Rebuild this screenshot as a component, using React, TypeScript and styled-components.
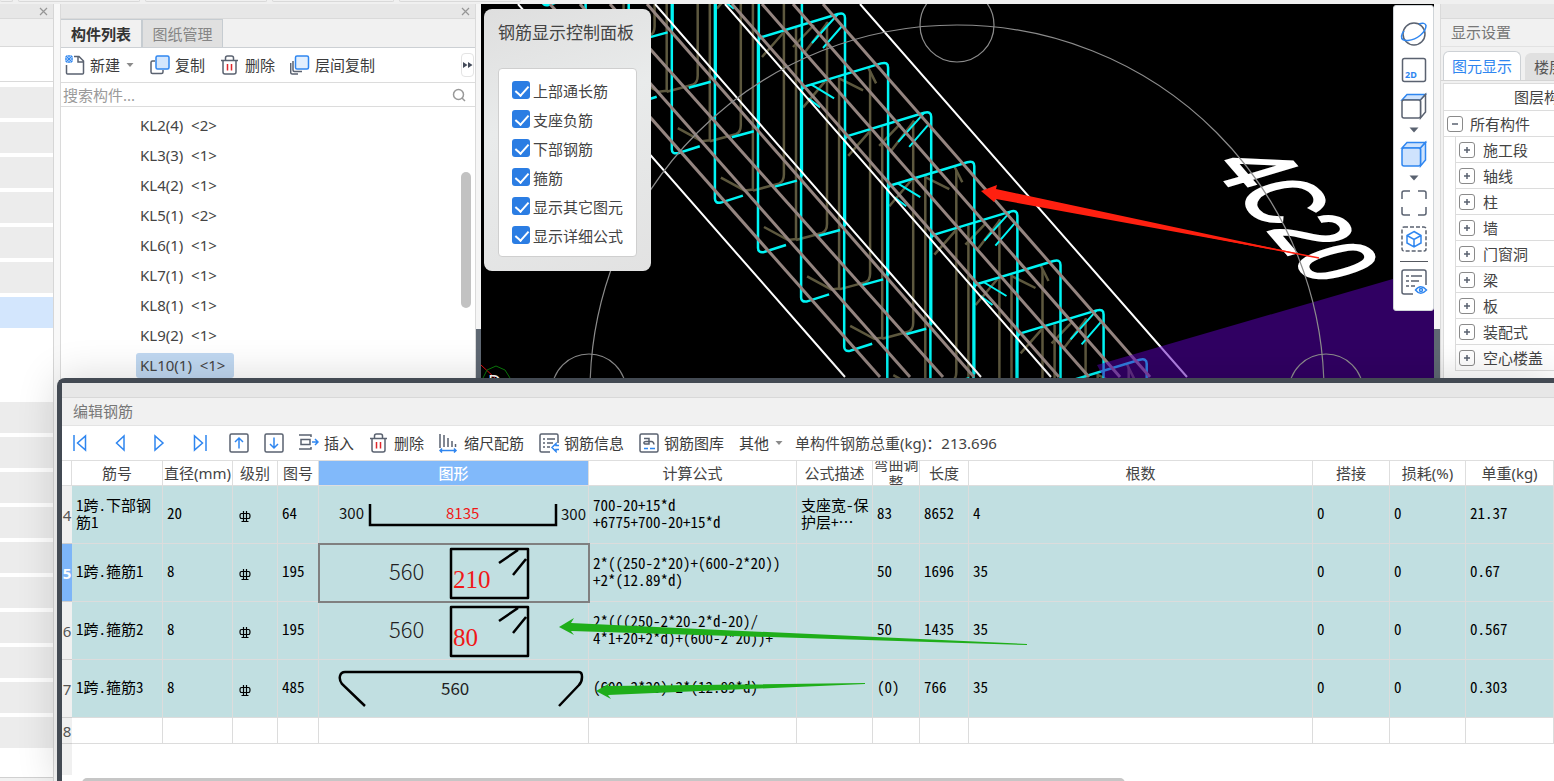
import React from "react";
import styled, { createGlobalStyle } from "styled-components";

const ui = `"Noto Sans", "Noto Sans CJK SC", sans-serif`;
const mono = `"Noto Sans Mono CJK SC", "Liberation Mono", "Noto Sans CJK SC", monospace`;

const Global = createGlobalStyle`
  * { box-sizing: border-box; }
  body { margin: 0; overflow: hidden; font-family: ${ui}; font-size: 15px; color: #444; background: #f0f0f0; }
  button, input { font: inherit; color: inherit; }
`;

/* ---------- shell ---------- */
const Screen = styled.div`
  position: relative;
  display: flex;
  flex-direction: column;
  height: 100vh;
  overflow: hidden;
`;
const Ribbon = styled.div`
  display: flex;
  gap: 5px;
  height: 4px;
  flex: none;
  background: #f0f0f0;
`;
const RibbonGroup = styled.div<{ $first?: boolean }>`
  width: ${(p) => (p.$first ? 13 : 122)}px;
  height: 2px;
  border: 1px solid #d9d9d9;
  border-top: 0;
  border-left-width: ${(p) => (p.$first ? 0 : 1)}px;
  border-radius: 0 0 3px 3px;
`;
const Workspace = styled.div`
  display: flex;
  flex: 1;
  min-height: 0;
`;
const Gutter = styled.div<{ $dark?: boolean; $w?: number }>`
  width: ${(p) => p.$w ?? 6}px;
  flex: none;
  background: ${(p) =>
    p.$dark ? "linear-gradient(#f5f5f5 325px, #5f6873 325px)" : "#f8f8f8"};
`;
const GripBar = styled.div`
  display: flex;
  align-items: center;
  justify-content: flex-end;
  flex: none;
  height: 15px;
  padding-right: 4px;
  background: #e7e7e7;
  border-bottom: 1px solid #dadada;
`;
const CloseButton = styled.button`
  display: flex;
  padding: 0;
  border: 0;
  background: none;
`;

/* ---------- left module strip ---------- */
const Modules = styled.aside`
  display: flex;
  flex-direction: column;
  width: 54px;
  flex: none;
  background: #fff;
  border-right: 1px solid #d6d6d6;
`;
const ModuleHead = styled.div`
  flex: none;
  height: 28px;
  background: #f1f1f1;
  border-bottom: 1px solid #dadada;
`;
const ModuleSearch = styled.div`
  flex: none;
  height: 35px;
  border-bottom: 1px solid #dadada;
`;
const ModuleRows = styled.div`
  display: flex;
  flex-direction: column;
  gap: 4px;
  flex: 1;
  padding-top: 5px;
`;
const ModuleRow = styled.div<{ $kind: "plain" | "active" | "open" }>`
  height: ${(p) => (p.$kind === "open" ? 66 : 31)}px;
  background: ${(p) => ({ plain: "#ececec", active: "#d3e6fd", open: "#fff" })[p.$kind]};
`;
const ModuleFoot = styled.div`
  flex: none;
  height: 4px;
  background: #f1f1f1;
  border-top: 1px solid #d0d0d0;
`;

/* ---------- component list ---------- */
const ListPanel = styled.section`
  display: flex;
  flex-direction: column;
  width: 416px;
  flex: none;
  background: #fff;
  border: solid #dadada;
  border-width: 0 1px;
`;
const TabBar = styled.div`
  display: flex;
  flex: none;
  height: 29px;
  background: #f1f1f1;
  border-bottom: 1px solid #ccd0d4;
`;
const ListTab = styled.button<{ $active?: boolean }>`
  width: 81px;
  padding: 0;
  border: 1px solid #c6ccd1;
  border-left-width: ${(p) => (p.$active ? 0 : 1)}px;
  border-bottom: 0;
  background: ${(p) => (p.$active ? "#f1f1f1" : "#e0e0e0")};
  color: ${(p) => (p.$active ? "#333" : "#858585")};
  font-weight: ${(p) => (p.$active ? 700 : 400)};
  line-height: 20px;
`;
const ListTools = styled.div`
  display: flex;
  align-items: center;
  gap: 15px;
  flex: none;
  height: 35px;
  padding: 0 1px 0 4px;
  border-bottom: 1px solid #dcdcdc;
`;
const ToolButton = styled.button`
  display: flex;
  align-items: center;
  gap: 5px;
  padding: 0;
  border: 0;
  background: none;
  color: #3c3c3c;
  line-height: 20px;
  white-space: nowrap;
`;
const MoreButton = styled.button`
  display: flex;
  align-items: center;
  justify-content: center;
  width: 13px;
  height: 24px;
  margin-left: auto;
  padding: 0;
  border: 1px solid #e4e4e4;
  border-radius: 4px;
  background: #fff;
`;
const SearchBar = styled.label`
  display: flex;
  align-items: center;
  justify-content: space-between;
  flex: none;
  height: 24px;
  padding: 0 9px 0 2px;
  border-bottom: 1px solid #dcdcdc;
`;
const SearchInput = styled.input`
  flex: 1;
  min-width: 0;
  height: 22px;
  padding: 0;
  border: 0;
  outline: 0;
  background: none;
  &::placeholder { color: #9a9a9a; opacity: 1; }
`;
const ListBody = styled.div`
  display: flex;
  justify-content: space-between;
  flex: 1;
  min-height: 0;
  padding: 3px 4px 0 75px;
  overflow: hidden;
`;
const Items = styled.ul`
  margin: 0;
  padding: 0;
  list-style: none;
`;
const Item = styled.li`
  display: flex;
  align-items: center;
  height: 30px;
`;
const ItemLabel = styled.span<{ $active?: boolean }>`
  padding: 0 9px 1px 4px;
  border-radius: 3px;
  background: ${(p) => (p.$active ? "#c0d8f1" : "none")};
  line-height: 24px;
  white-space: pre;
`;
const Thumb = styled.div`
  width: 10px;
  height: 136px;
  margin-top: 62px;
  border-radius: 5px;
  background: #c2c2c2;
`;

/* ---------- 3D view ---------- */
const View = styled.main`
  position: relative;
  flex: 1;
  min-width: 0;
  overflow: hidden;
  background: #000;
`;
const Scene = styled.svg`
  display: block;
  width: 100%;
  height: 374px;
`;
const RebarPanel = styled.section`
  position: absolute;
  left: 3px;
  top: 5px;
  display: flex;
  flex-direction: column;
  gap: 23px;
  width: 167px;
  padding: 12px 14px 14px;
  border-radius: 8px;
  background: linear-gradient(160deg, #dedede, #e9ebeb 40%, #e2e2e2);
`;
const RebarTitle = styled.h2`
  margin: 0;
  font-size: 17px;
  font-weight: 400;
  line-height: 24px;
  white-space: nowrap;
`;
const Checks = styled.div`
  display: flex;
  flex-direction: column;
  gap: 9px;
  padding: 11px 13px;
  border: 1px solid #cfcfcf;
  border-radius: 4px;
  background: #fff;
`;
const CheckLabel = styled.label`
  display: flex;
  align-items: center;
  gap: 3px;
  height: 20px;
  white-space: nowrap;
`;
const CheckBox = styled.input`
  position: relative;
  appearance: none;
  flex: none;
  width: 18px;
  height: 18px;
  margin: 0;
  border-radius: 3px;
  background: #2b7de3;
  &:checked::after {
    content: "";
    position: absolute;
    left: 6px;
    top: 2px;
    width: 6px;
    height: 11px;
    border: solid #fff;
    border-width: 0 2px 2px 0;
    transform: rotate(42deg);
  }
`;
const ViewTools = styled.div`
  position: absolute;
  right: 0;
  top: 1px;
  display: flex;
  flex-direction: column;
  align-items: center;
  width: 41px;
  padding: 14px 0;
  border: 1px solid #cfd4d8;
  border-radius: 3px;
  background: #fff;
`;
const ViewButton = styled.button<{ $h?: number }>`
  display: flex;
  align-items: center;
  justify-content: center;
  width: 28px;
  height: ${(p) => p.$h ?? 36}px;
  padding: 0;
  border: 0;
  background: none;
`;
const ViewDivider = styled.hr`
  width: 28px;
  margin: 1px 0 6px;
  border: 0;
  border-top: 1px solid #55585f;
`;

/* ---------- display settings ---------- */
const Settings = styled.aside`
  display: flex;
  flex-direction: column;
  width: 114px;
  flex: none;
  overflow: hidden;
  background: #f1f1f1;
  border-left: 1px solid #dadada;
`;
const SettingsTitle = styled.div`
  flex: none;
  height: 28px;
  padding-left: 10px;
  color: #777;
  line-height: 27px;
  border-bottom: 1px solid #e2e2e2;
`;
const SettingsTabs = styled.div`
  display: flex;
  align-items: flex-end;
  gap: 4px;
  flex: none;
  height: 34px;
  padding-left: 2px;
  border-bottom: 1px solid #d4d4d4;
`;
const SettingsTab = styled.button<{ $active?: boolean }>`
  flex: none;
  height: ${(p) => (p.$active ? 29 : 27)}px;
  padding: 0 8px;
  border: 1px solid ${(p) => (p.$active ? "#cdd1d5" : "#e0e0e0")};
  border-bottom: 0;
  border-radius: 6px 6px 0 0;
  background: ${(p) => (p.$active ? "#fff" : "#e0e0e0")};
  color: ${(p) => (p.$active ? "#2f86f0" : "#555")};
  line-height: 20px;
  white-space: nowrap;
`;
const Tree = styled.div`
  flex: 1;
  margin: 2px 0 0 2px;
  border: solid #dcdcdc;
  border-width: 1px 0 0 1px;
  background: #fff;
`;
const TreeHead = styled.div`
  height: 27px;
  padding-left: 70px;
  border-bottom: 1px solid #dcdcdc;
  line-height: 26px;
  white-space: nowrap;
`;
const TreeRow = styled.div<{ $child?: boolean }>`
  display: flex;
  align-items: center;
  gap: ${(p) => (p.$child ? 8 : 7)}px;
  height: 26px;
  margin-left: ${(p) => (p.$child ? 11 : 0)}px;
  padding-left: 3px;
  border-bottom: 1px solid #dcdcdc;
  border-left: ${(p) => (p.$child ? "1px solid #dcdcdc" : "0")};
  white-space: nowrap;
`;
const Toggle = styled.button`
  display: flex;
  align-items: center;
  justify-content: center;
  flex: none;
  width: 16px;
  height: 16px;
  padding: 0;
  border: 1px solid #8a8a8a;
  border-radius: 3px;
  background: #fff;
`;

/* ---------- rebar editor ---------- */
const Editor = styled.section`
  position: absolute;
  left: 57px;
  right: 0;
  top: 378px;
  bottom: 0;
  display: flex;
  flex-direction: column;
  border: solid #434a53;
  border-width: 5px 0 0 5px;
  border-radius: 8px 0 0 0;
  background: #fff;
  box-shadow: 0 0 40px rgba(0, 0, 0, 0.16);
`;
const EditorGrip = styled.div`
  flex: none;
  height: 15px;
  background: #e7e7e7;
  border-bottom: 1px solid #d8d8d8;
`;
const EditorTitle = styled.h1`
  flex: none;
  height: 28px;
  margin: 0;
  padding-left: 11px;
  background: #f1f1f1;
  border-bottom: 1px solid #e4e4e4;
  color: #777;
  font-size: 15px;
  font-weight: 400;
  line-height: 26px;
`;
const EditorTools = styled.div`
  display: flex;
  align-items: center;
  gap: 15px;
  flex: none;
  height: 34px;
  padding-left: 8px;
`;
const NavGroup = styled.div`
  display: flex;
  gap: 20px;
  margin-right: 4px;
`;
const Total = styled.span`
  margin-left: -4px;
  line-height: 20px;
  white-space: nowrap;
`;
const TableArea = styled.div`
  position: relative;
  flex: 1;
  overflow: hidden;
  background: linear-gradient(90deg, #f0f0f0 10px, #fff 10px);
`;
const Grid = styled.table`
  width: 100%;
  table-layout: fixed;
  border-collapse: separate;
  border-spacing: 0;
`;
const HeadCell = styled.th<{ $active?: boolean }>`
  height: 26px;
  padding: 0;
  border: solid #dedede;
  border-width: 1px 1px 1px 0;
  background: ${(p) => (p.$active ? "#81b9fa" : "#fff")};
  color: ${(p) => (p.$active ? "#fff" : "#444")};
  font-weight: ${(p) => (p.$active ? 500 : 400)};
`;
const HeadText = styled.div`
  display: flex;
  align-items: center;
  justify-content: center;
  height: 24px;
  overflow: hidden;
  line-height: 18px;
`;
const Num = styled.th<{ $active?: boolean }>`
  padding: 0;
  border: solid #cfcfcf;
  border-width: 0 0 1px;
  background: ${(p) => (p.$active ? "#7db5f8" : "#f0f0f0")};
  color: ${(p) => (p.$active ? "#fff" : "#555")};
  font-weight: ${(p) => (p.$active ? 700 : 400)};
`;
const Row = styled.tr<{ $blank?: boolean }>`
  height: ${(p) => (p.$blank ? 26 : 58)}px;
  background: ${(p) => (p.$blank ? "#fff" : "#c1dfe1")};
`;
const Cell = styled.td`
  padding: 0 2px 4px 4px;
  border: solid #dcdcdc;
  border-width: 0 1px 1px 0;
  overflow: hidden;
  color: #000;
  font-family: ${mono};
  line-height: 17px;
  white-space: pre;
`;
const GradeCell = styled(Cell)`
  padding: 4px 0 0 6px;
  & > svg { display: block; }
`;
const ShapeCell = styled.td<{ $active?: boolean }>`
  padding: 0;
  border: solid #dcdcdc;
  border-width: 0 1px 1px 0;
  outline: ${(p) => (p.$active ? "2px solid #808080" : "none")};
  outline-offset: -1px;
`;
const Shape = styled.svg`
  display: block;
`;
const Marks = styled.svg`
  position: absolute;
  left: 0;
  top: 0;
  pointer-events: none;
`;
const ScrollTrack = styled.div`
  flex: none;
  height: 6px;
  padding: 3px 429px 0 20px;
  overflow: hidden;
  background: #fff;
`;
const ScrollThumb = styled.div`
  height: 10px;
  border-radius: 5px;
  background: #c6c6c6;
`;

/* ---------- icons ---------- */
const INK = "#5a6270";
const BLUE = "#2f86f0";

const Svg = ({ w = 20, h = 20, children }: { w?: number; h?: number; children: React.ReactNode }) => (
  <svg width={w} height={h} viewBox={`0 0 ${w} ${h}`} fill="none" stroke={INK} strokeWidth="1.5" aria-hidden="true">
    {children}
  </svg>
);
const CloseIcon = () => (
  <Svg w={11} h={11}><path d="M2 2l7 7M9 2l-7 7" stroke="#969696" strokeWidth="1.2" /></Svg>
);
const NewIcon = () => (
  <Svg>
    <path d="M1.5 10v8q0 1 1 1h15q1 0 1-1V6l-4.500-4.500H9M13 2v5h5" />
    <path d="M1 1h6v6H1zM1 1l6 6M7 1L1 7M4 0v8M0 4h8" stroke={BLUE} strokeWidth="1" />
  </Svg>
);
const CopyIcon = () => (
  <Svg>
    <path d="M5 6H2.500q-1.500 0-1.500 1.500V17q0 1.500 1.500 1.500h9q1.500 0 1.500-1.500v-2" />
    <rect x="6" y="1" width="13" height="13" rx="1.500" fill="#d3e6fd" stroke={BLUE} />
  </Svg>
);
const LayerCopyIcon = () => (
  <Svg>
    <path d="M3 6v9q0 1.500 1.500 1.500H12M0.700 8v9.500q0 1.500 1.500 1.500H8" />
    <rect x="5.500" y="1" width="13" height="13" rx="1.500" fill="#e2effe" stroke={BLUE} />
  </Svg>
);
const TrashIcon = () => (
  <Svg>
    <path d="M1 5.500h17M5.500 5V3q0-2 2-2h4q2 0 2 2v2M3 6v11q0 2 2 2h9q2 0 2-2V6" />
    <path d="M7.500 9v6.500M11.500 9v6.500" stroke="#e0262b" />
  </Svg>
);
const Caret = ({ color = "#8a8a8a" }: { color?: string }) => (
  <Svg w={10} h={6}><path d="M1.500 1h7L5 5z" fill={color} stroke="none" /></Svg>
);
const WideCaret = () => (
  <Svg w={10} h={6}><path d="M0.500 0.500h9L5 5.500z" fill={INK} stroke="none" /></Svg>
);
const SearchIcon = () => (
  <Svg w={14} h={14}><circle cx="6.500" cy="6.500" r="5" stroke="#999" /><path d="M10 10l3 3" stroke="#999" /></Svg>
);
const Forward = () => (
  <Svg w={10} h={8}><path d="M0 1l4.500 3L0 7zM5 1l4.500 3L5 7z" fill="#444b5a" stroke="none" /></Svg>
);
const NavIcon = ({ kind }: { kind: "first" | "prev" | "next" | "last" }) => (
  <Svg>
    {kind === "first" && <path d="M4 2v16M15.500 3v14L7.500 10z" stroke={BLUE} />}
    {kind === "prev" && <path d="M14 3v14L6.500 10z" stroke={BLUE} />}
    {kind === "next" && <path d="M5 3v14l8-7z" stroke={BLUE} />}
    {kind === "last" && <path d="M16 2v16M4.500 3v14l8-7z" stroke={BLUE} />}
  </Svg>
);
const BoxArrow = ({ down }: { down?: boolean }) => (
  <Svg>
    <rect x="1" y="1" width="18" height="18" rx="1.500" />
    <path d={down ? "M10 4.500v10.500M6 11l4 4 4-4" : "M10 15.500V5M6 9l4-4 4 4"} stroke={BLUE} />
  </Svg>
);
const InsertIcon = () => (
  <Svg>
    <path d="M0 2h12v2M2 6.500h9v5H2zM0 16h12v-2" />
    <path d="M13 9h6M16 6l3 3-3 3" stroke={BLUE} />
  </Svg>
);
const ScaleIcon = () => (
  <Svg>
    <path d="M1 1v14M5 2v12M9 5v9M13 8v6M16.500 11v3" />
    <path d="M1 17.500h16M3 15.500l-2 2 2 2M15 15.500l2 2-2 2" stroke={BLUE} />
  </Svg>
);
const InfoIcon = () => (
  <Svg>
    <path d="M11 19H2.500Q1 19 1 17.500v-15Q1 1 2.500 1h15Q19 1 19 2.500V10" />
    <path d="M4 6h2M8 6h8M4 10h2M8 10h6M4 14h2M8 14h3" />
    <path d="M20 12.500h-3v-2l-4 4 4 4v-2h3" stroke={BLUE} />
  </Svg>
);
const LibraryIcon = () => (
  <Svg>
    <rect x="1" y="1" width="18" height="18" rx="1.500" />
    <path d="M5 5.500h5v5.500H7q-2.500 0-2-1.500 0-1 2-1h5.500q2 0 2.500 3" />
    <path d="M5 15.500h4M11 15.500h5" stroke={BLUE} />
  </Svg>
);
const OrbitIcon = () => (
  <Svg w={28} h={28}>
    <circle cx="14" cy="14" r="11" />
    <path d="M19 4q6-2 7 1.500c0 7-9 14-18 15Q1 21 1.500 16q0-2 2.500-5" stroke={BLUE} />
  </Svg>
);
const FlatIcon = () => (
  <Svg w={26} h={26}>
    <rect x="1.500" y="1.500" width="23" height="23" rx="2" />
    <text x="4" y="21" fill={BLUE} stroke="none" fontSize="9" fontWeight="700" fontFamily="Noto Sans, sans-serif">2D</text>
  </Svg>
);
const CubeIcon = ({ solid }: { solid?: boolean }) => {
  const c = solid ? BLUE : INK;
  const f = solid ? "#cfe3fd" : "#fff";
  return (
    <Svg w={28} h={28}>
      <path d="M2 8l5-5.500h18.500L20.500 8z" fill={solid ? f : "#cfe3fd"} stroke={BLUE} />
      <path d="M20.500 8l5-5.500V20l-5 6z" fill={f} stroke={c} />
      <rect x="2" y="8" width="18.500" height="18" rx="2" fill={f} stroke={c} />
    </Svg>
  );
};
const FrameIcon = () => (
  <Svg w={28} h={28}>
    <path d="M10 2H4Q2 2 2 4v6M18 2h6q2 0 2 2v6M10 26H4q-2 0-2-2v-6M18 26h6q2 0 2-2v-6" />
  </Svg>
);
const IsoIcon = () => (
  <Svg w={28} h={28}>
    <rect x="2" y="2" width="24" height="24" rx="2" strokeDasharray="4 2" />
    <path d="M14 6.500l7 4v7.500l-7 4-7-4v-7.500zM7 10.500l7 4 7-4M14 14.500V22" stroke={BLUE} />
  </Svg>
);
const FilterIcon = () => (
  <Svg w={28} h={28}>
    <path d="M13 26H4q-2 0-2-2V4q0-2 2-2h20q2 0 2 2v13" />
    <path d="M6 8h3M11 8h11M6 13h3M11 13h8M6 18h3M11 18h4" />
    <path d="M15.500 22q5-6.500 11 0-6 6.500-11 0z" stroke={BLUE} />
    <circle cx="21" cy="22" r="1.500" stroke={BLUE} />
  </Svg>
);

/* Hot-rolled ribbed bar grade mark */
const GradeMark = () => (
  <svg width="12" height="13" viewBox="0 0 12 13" fill="none" stroke="#000" strokeWidth="1.2" aria-label="HRB400">
    <path d="M2.500 3.500h7q1.500 0 1.500 2.500t-1.500 2.500h-7Q1 8.500 1 6t1.500-2.500zM4.500 1v10.500M7.500 1v10.500M2.500 11.500h7" />
  </svg>
);

/* ---------- scene drawing ---------- */
const steps = [-5, -4, -3, -2, -1, 0, 1, 2, 3, 4, 5, 6, 7];
const barTops = [647, 732, 762, 793, 823];
const lowBars = [
  [610, 4, 943, 377],
  [580, 4, 910, 377],
  [550, 4, 880, 377],
];

const ViewScene = () => (
  <Scene viewBox="481 4 953 374" preserveAspectRatio="xMinYMin slice" fill="none" aria-label="三维钢筋视图">
    <path d="M481 365l14 13" stroke="#e01010" />
    <path d="M483 378l4-8 9-4 9 4 5 8" stroke="#0b7a0b" />
    <text x="488" y="388" fill="#fff" fontSize="18" fontFamily="Noto Sans, sans-serif">D</text>
    <text transform="matrix(0.44 0.51 -0.98 0.29 1210 164)" fill="#fff" stroke="#fff" strokeWidth="3" fontSize="100" fontFamily="Liberation Sans, sans-serif">4C20</text>
    <g stroke="#5d583e" strokeWidth="2.500">
      {steps.map((k) => (
        <g key={k} transform={`translate(${43.1 * k} ${49.4 * k})`}>
          <path d="M796 28v211M827 22v202q0 7-5 9l-26 7M764 227l24 13 8-1" />
          <path d={k % 2 ? "M760 58l22-26M796 29l24 12M825 18l8 16" : "M762 57l22-25M793 47l21-22M805 52l23-30"} />
        </g>
      ))}
    </g>
    <g stroke="#00f5f5" strokeWidth="2">
      {steps.map((k) => (
        <g key={k} transform={`translate(${43.1 * k} ${49.4 * k})`}>
          <path d="M758 42v206q0 5 6 4l22-7M818 236l22-6M845 226V18q0-6-7-4L762 37q-4 2-4 5" strokeWidth={2.5} />
          <path d={k % 2 ? "M768 35l23 14M765 49l12 9" : "M812 43l26-29M823 48l19-22"} />
        </g>
      ))}
    </g>
    <g stroke="#958580" strokeWidth="3">
      {barTops.map((x) => <path key={x} d={`M${x} 4l327 373`} />)}
      {lowBars.map(([a, b, c, d]) => <path key={a} d={`M${a} ${b}L${c} ${d}`} />)}
    </g>
    <g stroke="#fff" strokeWidth="2">
      <path d="M518 4l327 373M655 4l326 373M725 4l326 373M860 4l327 373" />
    </g>
    <path d="M1097 365l337-98v111H1104z" fill="#6000c4" opacity="0.5" />
    <g stroke="#8c8c8c" strokeWidth="1.200">
      <circle cx="957" cy="392" r="367" />
      <circle cx="957" cy="25" r="37" />
      <circle cx="589" cy="391" r="37" />
      <circle cx="1326" cy="391" r="37" />
    </g>
    <path d="M981 191l16-6-1 4 323 69-323-59-2 3z" fill="#ff2010" />
    <path d="M1180 231l139 27" stroke="#ff2010" strokeWidth="1.500" />
  </Scene>
);

/* ---------- table data ---------- */
const UBar = () => (
  <Shape width="269" height="57" fill="none">
    <path d="M51 18v21h186V18" stroke="#000" strokeWidth="2.500" />
    <g fontFamily="Noto Sans CJK SC, sans-serif" fontSize="15" fill="#111">
      <text x="20" y="33">300</text>
      <text x="242" y="34">300</text>
      <text x="127" y="33" fill="#f01818">8135</text>
    </g>
  </Shape>
);
const Stirrup = ({ inner }: { inner: string }) => (
  <Shape width="269" height="57" fill="none">
    <path d="M132 5h77v49h-77zM180 19l19-13M194 31l13-16" stroke="#000" strokeWidth="2.500" strokeLinejoin="round" />
    <text x="70" y="36" fill="#222" fontFamily="Noto Sans CJK SC, sans-serif" fontWeight="300" fontSize="22">560</text>
    <text x="134" y="44" fill="#f01818" fontFamily="Liberation Serif, serif" fontSize="25">{inner}</text>
  </Shape>
);
const Tie = () => (
  <Shape width="269" height="57" fill="none">
    <path d="M46 46L23 24q-3-4-2-8 1-4 5-4h234q3 0 3 5 0 5-3 8L240 46" stroke="#000" strokeWidth="2.500" />
    <text x="122" y="35" fill="#222" fontFamily="Noto Sans CJK SC, sans-serif" fontSize="17">560</text>
  </Shape>
);

interface BarRow {
  no: number;
  name: string;
  dia: string;
  figure: string;
  shape: React.ReactNode;
  formula: string;
  note: string;
  bend: string;
  length: string;
  count: string;
  weight: string;
}
const bars: BarRow[] = [
  { no: 4, name: "1跨.下部钢\n筋1", dia: "20", figure: "64", shape: <UBar />, formula: "700-20+15*d\n+6775+700-20+15*d", note: "支座宽-保\n护层+…", bend: "83", length: "8652", count: "4", weight: "21.37" },
  { no: 5, name: "1跨.箍筋1", dia: "8", figure: "195", shape: <Stirrup inner="210" />, formula: "2*((250-2*20)+(600-2*20))\n+2*(12.89*d)", note: "", bend: "50", length: "1696", count: "35", weight: "0.67" },
  { no: 6, name: "1跨.箍筋2", dia: "8", figure: "195", shape: <Stirrup inner="80" />, formula: "2*(((250-2*20-2*d-20)/\n4*1+20+2*d)+(600-2*20))+", note: "", bend: "50", length: "1435", count: "35", weight: "0.567" },
  { no: 7, name: "1跨.箍筋3", dia: "8", figure: "485", shape: <Tie />, formula: "(600-2*20)+2*(12.89*d)", note: "", bend: "(0)", length: "766", count: "35", weight: "0.303" },
];
const columns: [string, number?][] = [
  ["筋号", 91], ["直径(mm)", 70], ["级别", 45], ["图号", 41], ["图形", 270], ["计算公式", 208],
  ["公式描述", 76], ["弯曲调整", 47], ["长度", 49], ["根数"], ["搭接", 77], ["损耗(%)", 76], ["单重(kg)", 88],
];

const RebarTable = () => (
  <Grid>
    <colgroup>
      <col style={{ width: 10 }} />
      {columns.map(([name, width]) => <col key={name} style={{ width }} />)}
    </colgroup>
    <thead>
      <tr>
        <HeadCell />
        {columns.map(([name]) => (
          <HeadCell key={name} $active={name === "图形"}><HeadText>{name}</HeadText></HeadCell>
        ))}
      </tr>
    </thead>
    <tbody>
      {bars.map((b) => (
        <Row key={b.no}>
          <Num $active={b.no === 5}>{b.no}</Num>
          <Cell>{b.name}</Cell>
          <Cell>{b.dia}</Cell>
          <GradeCell><GradeMark /></GradeCell>
          <Cell>{b.figure}</Cell>
          <ShapeCell $active={b.no === 5}>{b.shape}</ShapeCell>
          <Cell>{b.formula}</Cell>
          <Cell>{b.note}</Cell>
          <Cell>{b.bend}</Cell>
          <Cell>{b.length}</Cell>
          <Cell>{b.count}</Cell>
          <Cell>0</Cell>
          <Cell>0</Cell>
          <Cell>{b.weight}</Cell>
        </Row>
      ))}
      <Row $blank>
        <Num>8</Num>
        {columns.map(([name]) => <Cell key={name} />)}
      </Row>
    </tbody>
  </Grid>
);

const names = ["KL2(4)  <2>", "KL3(3)  <1>", "KL4(2)  <1>", "KL5(1)  <2>", "KL6(1)  <1>", "KL7(1)  <1>", "KL8(1)  <1>", "KL9(2)  <1>", "KL10(1)  <1>"];
const layers = ["施工段", "轴线", "柱", "墙", "门窗洞", "梁", "板", "装配式", "空心楼盖"];
const checks = ["上部通长筋", "支座负筋", "下部钢筋", "箍筋", "显示其它图元", "显示详细公式"];

export default function App() {
  return (
    <Screen>
      <Global />
      <Ribbon>
        <RibbonGroup $first />
        {[1, 2, 3, 4].map((n) => <RibbonGroup key={n} />)}
      </Ribbon>
      <Workspace>
        <Modules>
          <GripBar><CloseButton aria-label="关闭"><CloseIcon /></CloseButton></GripBar>
          <ModuleHead />
          <ModuleSearch />
          <ModuleRows>
            {Array.from({ length: 18 }, (_, i) => (
              <ModuleRow key={i} $kind={i === 6 ? "active" : i === 7 ? "open" : "plain"} />
            ))}
          </ModuleRows>
          <ModuleFoot />
        </Modules>
        <Gutter />
        <ListPanel>
          <GripBar><CloseButton aria-label="关闭"><CloseIcon /></CloseButton></GripBar>
          <TabBar>
            <ListTab $active>构件列表</ListTab>
            <ListTab>图纸管理</ListTab>
          </TabBar>
          <ListTools>
            <ToolButton><NewIcon />新建 <Caret /></ToolButton>
            <ToolButton><CopyIcon />复制</ToolButton>
            <ToolButton><TrashIcon />删除</ToolButton>
            <ToolButton><LayerCopyIcon />层间复制</ToolButton>
            <MoreButton aria-label="更多"><Forward /></MoreButton>
          </ListTools>
          <SearchBar>
            <SearchInput placeholder="搜索构件..." aria-label="搜索构件" />
            <SearchIcon />
          </SearchBar>
          <ListBody>
            <Items>
              {names.map((n, i) => (
                <Item key={n}><ItemLabel $active={i === 8}>{n}</ItemLabel></Item>
              ))}
            </Items>
            <Thumb />
          </ListBody>
        </ListPanel>
        <Gutter $dark $w={5} />
        <View>
          <ViewScene />
          <RebarPanel>
            <RebarTitle>钢筋显示控制面板</RebarTitle>
            <Checks>
              {checks.map((c) => (
                <CheckLabel key={c}><CheckBox type="checkbox" defaultChecked />{c}</CheckLabel>
              ))}
            </Checks>
          </RebarPanel>
          <ViewTools>
            <ViewButton $h={28} aria-label="动态观察"><OrbitIcon /></ViewButton>
            <ViewButton $h={44} aria-label="二维"><FlatIcon /></ViewButton>
            <ViewButton $h={28} aria-label="视图方向"><CubeIcon /></ViewButton>
            <ViewButton $h={20} aria-label="视图方向选项"><WideCaret /></ViewButton>
            <ViewButton $h={28} aria-label="显示样式"><CubeIcon solid /></ViewButton>
            <ViewButton $h={20} aria-label="显示样式选项"><WideCaret /></ViewButton>
            <ViewButton $h={30} aria-label="全屏"><FrameIcon /></ViewButton>
            <ViewButton $h={42} aria-label="局部三维"><IsoIcon /></ViewButton>
            <ViewDivider />
            <ViewButton $h={28} aria-label="显示设置"><FilterIcon /></ViewButton>
          </ViewTools>
        </View>
        <Gutter $dark />
        <Settings>
          <GripBar />
          <SettingsTitle>显示设置</SettingsTitle>
          <SettingsTabs>
            <SettingsTab $active>图元显示</SettingsTab>
            <SettingsTab>楼层显示</SettingsTab>
          </SettingsTabs>
          <Tree>
            <TreeHead>图层构件</TreeHead>
            <TreeRow>
              <Toggle aria-label="收起"><Svg w={8} h={8}><path d="M1 4h6" /></Svg></Toggle>
              所有构件
            </TreeRow>
            {layers.map((l) => (
              <TreeRow $child key={l}>
                <Toggle aria-label={`展开${l}`}><Svg w={8} h={8}><path d="M1 4h6M4 1v6" /></Svg></Toggle>
                {l}
              </TreeRow>
            ))}
          </Tree>
        </Settings>
      </Workspace>

      <Editor>
        <EditorGrip />
        <EditorTitle>编辑钢筋</EditorTitle>
        <EditorTools>
          <NavGroup>
            <ToolButton aria-label="首条"><NavIcon kind="first" /></ToolButton>
            <ToolButton aria-label="上一条"><NavIcon kind="prev" /></ToolButton>
            <ToolButton aria-label="下一条"><NavIcon kind="next" /></ToolButton>
            <ToolButton aria-label="末条"><NavIcon kind="last" /></ToolButton>
          </NavGroup>
          <ToolButton aria-label="上移"><BoxArrow /></ToolButton>
          <ToolButton aria-label="下移"><BoxArrow down /></ToolButton>
          <ToolButton><InsertIcon />插入</ToolButton>
          <ToolButton><TrashIcon />删除</ToolButton>
          <ToolButton><ScaleIcon />缩尺配筋</ToolButton>
          <ToolButton><InfoIcon />钢筋信息</ToolButton>
          <ToolButton><LibraryIcon />钢筋图库</ToolButton>
          <ToolButton>其他 <Caret /></ToolButton>
          <Total>单构件钢筋总重(kg)：213.696</Total>
        </EditorTools>
        <TableArea>
          <RebarTable />
          <Marks width="980" height="260" viewBox="62 460 980 260" aria-hidden="true">
            <path d="M559 627l15-9-3 5 456 21v1L571 631l3 4z" fill="#1fae1a" />
            <path d="M596 691l14-8-2 3 257-3v1L608 695l3 4z" fill="#1fae1a" />
          </Marks>
        </TableArea>
        <ScrollTrack><ScrollThumb /></ScrollTrack>
      </Editor>
    </Screen>
  );
}
